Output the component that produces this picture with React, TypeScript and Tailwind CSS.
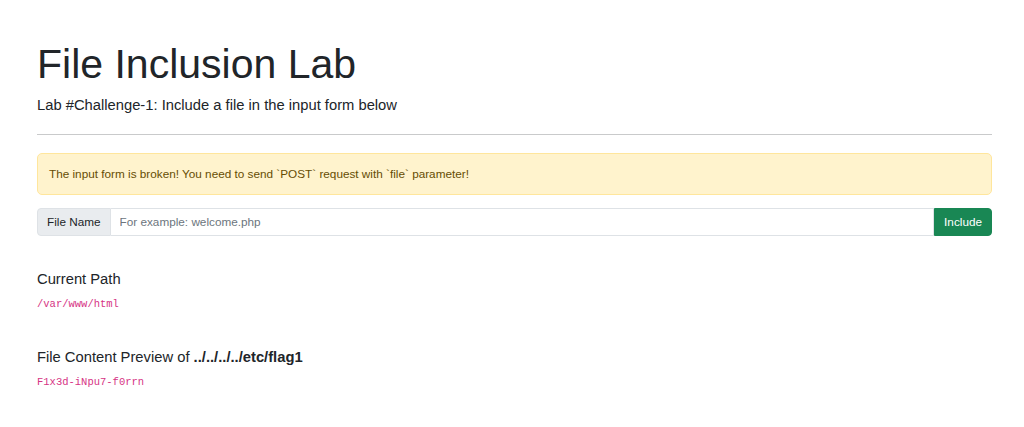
// File inclusion lab page — Bootstrap-like look, rebuilt with Tailwind.

const sans = 'font-["Liberation_Sans",Arial,sans-serif]'
const mono = 'font-["Liberation_Mono","Courier_New",monospace]'

export default function App() {
  return (
    <div className={`min-h-[427px] bg-white text-[#212529] ${sans}`}>
      <div className="pl-[37px] pr-[32px] pt-[39px]">
        <h1 className="text-[41px] leading-[50px] font-normal">File Inclusion Lab</h1>
        <p className="mt-[5px] text-[14.75px] leading-[22px]">
          Lab #Challenge-1: Include a file in the input form below
        </p>
        <hr className="mt-[18px] border-0 border-t border-[#c9cacb]" />

        <div className="mt-[18px] rounded-[5px] border border-[#ffe69c] bg-[#fff3cd] px-[11px] py-[11px] text-[11.75px] leading-[18px] text-[#664d03]">
          The input form is broken! You need to send `POST` request with `file` parameter!
        </div>

        <div className="mt-[13px] flex h-[28px] text-[11.75px]">
          <span className="flex items-center rounded-l-[4px] border border-[#dee2e6] bg-[#e9ecef] px-[9px]">
            File Name
          </span>
          <input
            type="text"
            placeholder="For example: welcome.php"
            className="min-w-0 flex-1 border border-l-0 border-[#dee2e6] bg-white px-[9px] text-[11.75px] text-[#212529] outline-none placeholder:text-[#6c757d]"
          />
          <button
            type="button"
            className="rounded-r-[4px] border border-[#198754] bg-[#198754] px-[9px] text-[11.75px] text-white"
          >
            Include
          </button>
        </div>

        <h5 className="mt-[34px] text-[14.75px] leading-[18px] font-normal">Current Path</h5>
        <p className={`mt-[8px] text-[10.5px] leading-[16px] text-[#d63384] ${mono}`}>
          /var/www/html
        </p>

        <h5 className="mt-[36px] text-[14.75px] leading-[18px] font-normal">
          File Content Preview of <b className="font-bold">../../../../etc/flag1</b>
        </h5>
        <p className={`mt-[8px] text-[10.5px] leading-[16px] text-[#d63384] ${mono}`}>
          F1x3d-iNpu7-f0rrn
        </p>
      </div>
    </div>
  )
}
